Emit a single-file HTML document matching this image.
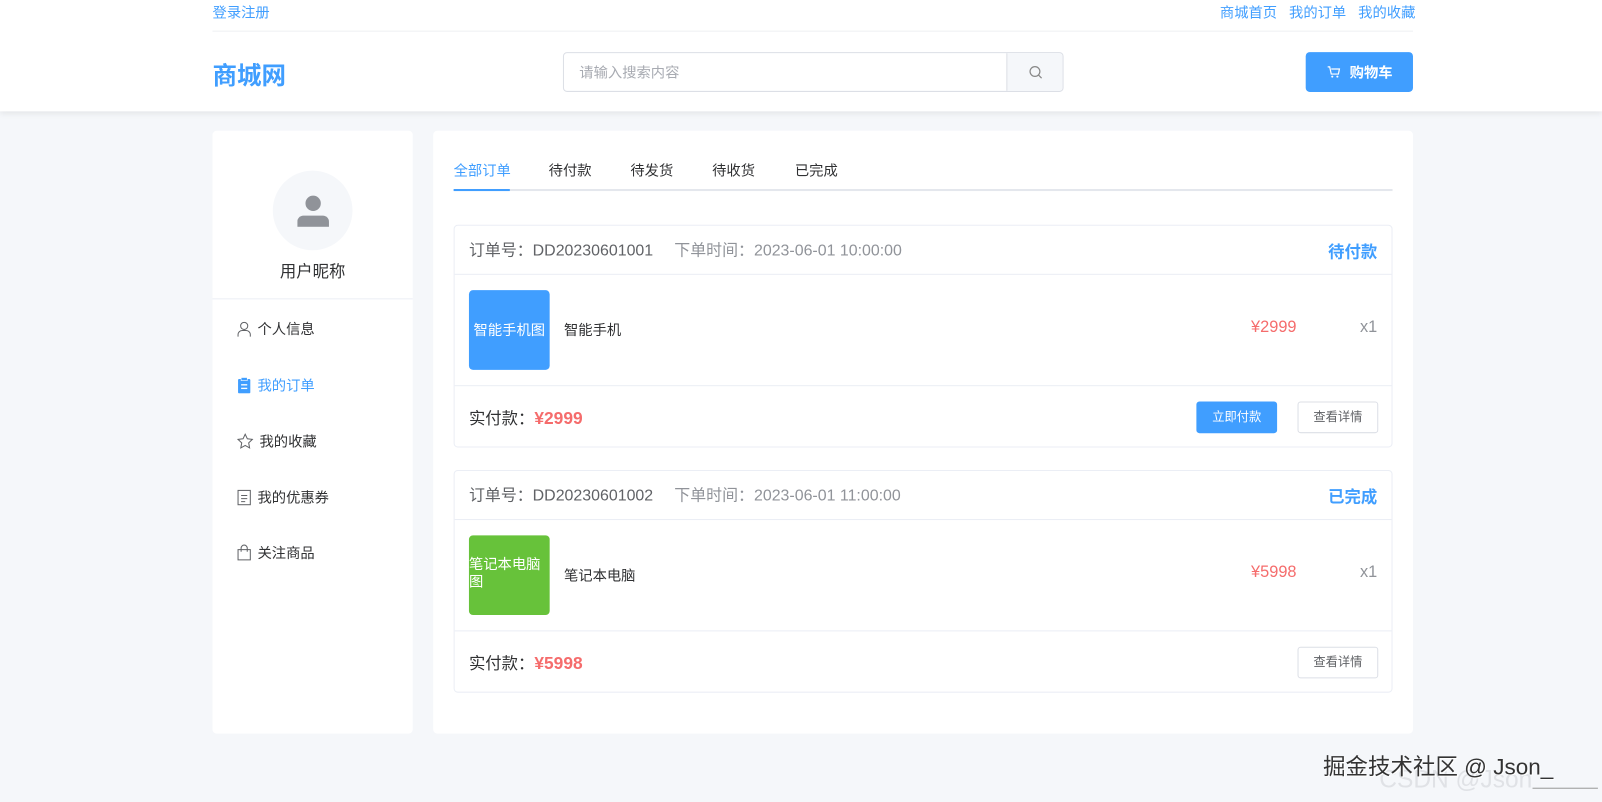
<!DOCTYPE html>
<html><head><meta charset="utf-8"><style>
*{margin:0;padding:0;box-sizing:border-box}
html,body{width:1602px;height:802px;overflow:hidden}
body{background:#f5f7fa;font-family:"Liberation Sans","Noto Sans CJK SC",sans-serif;color:#303133}
#w{position:absolute;left:0;top:0;width:1568px;height:785px;transform:scale(1.02168);transform-origin:0 0}
.abs{position:absolute}
.header{position:absolute;left:0;top:0;width:1568px;height:109px;background:#fff;box-shadow:0 2px 6px rgba(0,0,0,.08)}
.card{position:absolute;background:#fff;border-radius:4px}
.menu{position:absolute;left:232px;font-size:14px;color:#303133;display:flex;align-items:center}
.menu svg{margin-right:6px}
.tab{position:absolute;top:157px;font-size:14px;color:#303133}
.blue{color:#409eff !important}
.order{position:absolute;left:444px;width:919px;height:218px;border:1px solid #ebeef5;border-radius:4px;background:#fff}
.oh{height:48px;border-bottom:1px solid #ebeef5;position:relative;font-size:15.6px}
.oi{height:109px;border-bottom:1px solid #ebeef5;position:relative}
.btn{position:absolute;top:15px;width:79px;height:31px;border-radius:3px;font-size:12px;text-align:center;line-height:31px}
</style></head><body><div id="w">
<div class="header">
 <div class="abs blue" style="left:208px;top:2px;font-size:14px">登录注册</div>
 <div class="abs blue" style="left:1194px;top:2px;font-size:14px">商城首页&nbsp;&nbsp;&nbsp;我的订单&nbsp;&nbsp;&nbsp;我的收藏</div>
 <div class="abs" style="left:208px;top:30px;width:1175px;height:1px;background:#eef0f3"></div>
 <div class="abs blue" style="left:208px;top:54px;font-size:24px;font-weight:bold">商城网</div>
 <div class="abs" style="left:551px;top:51px;width:490px;height:39px;border:1px solid #dcdfe6;border-radius:4px;overflow:hidden">
  <div class="abs" style="left:15px;top:9px;font-size:14px;color:#a8abb2">请输入搜索内容</div>
  <div class="abs" style="left:433px;top:0;width:56px;height:37px;background:#f5f7fa;border-left:1px solid #dcdfe6">
   <svg class="abs" style="left:21px;top:12px" width="14" height="14" viewBox="0 0 14 14"><circle cx="6" cy="6" r="4.8" fill="none" stroke="#888" stroke-width="1.2"/><line x1="9.5" y1="9.5" x2="12.5" y2="12.5" stroke="#888" stroke-width="1.2"/></svg>
  </div>
 </div>
 <div class="abs" style="left:1278px;top:51px;width:105px;height:39px;background:#409eff;border-radius:4px;color:#fff;font-size:14px;font-weight:bold">
  <svg class="abs" style="left:21px;top:13px" width="13" height="13" viewBox="0 0 13 13"><path d="M0.5 1.5h2l1.5 7h7l1-5H4" fill="none" stroke="#fff" stroke-width="1.2"/><circle cx="5" cy="11" r="1" fill="#fff"/><circle cx="10" cy="11" r="1" fill="#fff"/></svg>
  <span class="abs" style="left:43px;top:10px">购物车</span>
 </div>
</div>

<div class="card" style="left:208px;top:128px;width:196px;height:590px">
 <div class="abs" style="left:59px;top:39px;width:78px;height:78px;border-radius:50%;background:#f5f7fa">
  <svg class="abs" style="left:24px;top:23px" width="31" height="32" viewBox="0 0 31 32"><circle cx="15.5" cy="9" r="7.5" fill="#909399"/><path d="M0 32v-5a6 6 0 0 1 6-6h19a6 6 0 0 1 6 6v5z" fill="#909399"/></svg>
 </div>
 <div class="abs" style="left:0;width:196px;top:124px;text-align:center;font-size:16px">用户昵称</div>
 <div class="abs" style="left:0;top:164px;width:196px;height:1px;background:#ebeef5"></div>
</div>
<div class="menu" style="top:312px"><svg width="14" height="16" viewBox="0 0 14 16"><circle cx="7" cy="5" r="3.5" fill="none" stroke="#606266"/><path d="M1 15.5v-2a4 4 0 0 1 4-4h4a4 4 0 0 1 4 4v2" fill="none" stroke="#606266"/></svg>个人信息</div>
<div class="menu blue" style="top:367px"><svg width="14" height="16" viewBox="0 0 14 16"><rect x="1" y="2" width="12" height="14" rx="1" fill="#409eff"/><rect x="4" y="0.5" width="6" height="3" fill="#409eff" stroke="#fff" stroke-width=".6"/><rect x="4" y="7" width="6" height="1.3" fill="#fff"/><rect x="4" y="10.5" width="6" height="1.3" fill="#fff"/></svg>我的订单</div>
<div class="menu" style="top:422px"><svg width="16" height="16" viewBox="0 0 16 16"><path d="M8 1l2.1 4.5 4.9.6-3.6 3.4.9 4.9L8 12l-4.3 2.4.9-4.9L1 6.1l4.9-.6z" fill="none" stroke="#606266"/></svg>我的收藏</div>
<div class="menu" style="top:477px"><svg width="14" height="16" viewBox="0 0 14 16"><rect x="1" y="1" width="12" height="14" fill="none" stroke="#606266"/><path d="M4 6h6M4 9h6M4 12h4" stroke="#606266"/></svg>我的优惠券</div>
<div class="menu" style="top:531px"><svg width="14" height="16" viewBox="0 0 14 16"><path d="M1 5h12v10H1z" fill="none" stroke="#606266"/><path d="M4 7V3.5a3 3 0 0 1 6 0V7" fill="none" stroke="#606266"/></svg>关注商品</div>

<div class="card" style="left:424px;top:128px;width:959px;height:590px"></div>
<div class="tab blue" style="left:444px">全部订单</div>
<div class="tab" style="left:537px">待付款</div>
<div class="tab" style="left:617px">待发货</div>
<div class="tab" style="left:697px">待收货</div>
<div class="tab" style="left:778px">已完成</div>
<div class="abs" style="left:444px;top:185px;width:919px;height:2px;background:#e4e7ed"></div>
<div class="abs" style="left:444px;top:185px;width:55px;height:2px;background:#409eff"></div>

<div class="order" style="top:220px">
 <div class="oh"><span class="abs" style="left:14px;top:12px;color:#606266">订单号：DD20230601001</span><span class="abs" style="left:215px;top:12px;color:#909399">下单时间：2023-06-01 10:00:00</span><span class="abs blue" style="right:14px;top:12px;font-weight:bold;font-size:16px">待付款</span></div>
 <div class="oi">
  <div class="abs" style="left:14px;top:15px;width:79px;height:78px;background:#409eff;border-radius:4px;color:#fff;font-size:14px;line-height:78px;text-align:center;white-space:nowrap">智能手机图</div>
  <span class="abs" style="left:107px;top:44px;font-size:14px">智能手机</span>
  <span class="abs" style="right:93px;top:43px;font-size:16px;color:#f56c6c">¥2999</span>
  <span class="abs" style="right:14px;top:43px;font-size:16px;color:#909399">x1</span>
 </div>
 <div style="position:relative;height:60px">
  <span class="abs" style="left:14px;top:18px;font-size:16px">实付款：<b style="color:#f56c6c;font-size:17px">¥2999</b></span>
  <div class="btn" style="left:726px;background:#409eff;color:#fff">立即付款</div>
  <div class="btn" style="left:825px;border:1px solid #dcdfe6;color:#606266;line-height:29px">查看详情</div>
 </div>
</div>

<div class="order" style="top:460px">
 <div class="oh"><span class="abs" style="left:14px;top:12px;color:#606266">订单号：DD20230601002</span><span class="abs" style="left:215px;top:12px;color:#909399">下单时间：2023-06-01 11:00:00</span><span class="abs blue" style="right:14px;top:12px;font-weight:bold;font-size:16px">已完成</span></div>
 <div class="oi">
  <div class="abs" style="left:14px;top:15px;width:79px;height:78px;background:#67c23a;border-radius:4px;color:#fff;font-size:14px;line-height:17px;padding-top:20px;overflow:hidden">笔记本电脑图</div>
  <span class="abs" style="left:107px;top:44px;font-size:14px">笔记本电脑</span>
  <span class="abs" style="right:93px;top:43px;font-size:16px;color:#f56c6c">¥5998</span>
  <span class="abs" style="right:14px;top:43px;font-size:16px;color:#909399">x1</span>
 </div>
 <div style="position:relative;height:60px">
  <span class="abs" style="left:14px;top:18px;font-size:16px">实付款：<b style="color:#f56c6c;font-size:17px">¥5998</b></span>
  <div class="btn" style="left:825px;border:1px solid #dcdfe6;color:#606266;line-height:29px">查看详情</div>
 </div>
</div>

<div class="abs" style="left:1350px;top:750px;font-size:24px;color:#e0e2e6">CSDN @Json</div>
<div class="abs" style="left:1295px;top:733px;font-size:22px;color:#333;text-shadow:1px 1px 0 #fff">掘金技术社区 @ Json_</div>
<div class="abs" style="left:1500px;top:771px;width:64px;height:1px;background:#999"></div>
</div></body></html>
